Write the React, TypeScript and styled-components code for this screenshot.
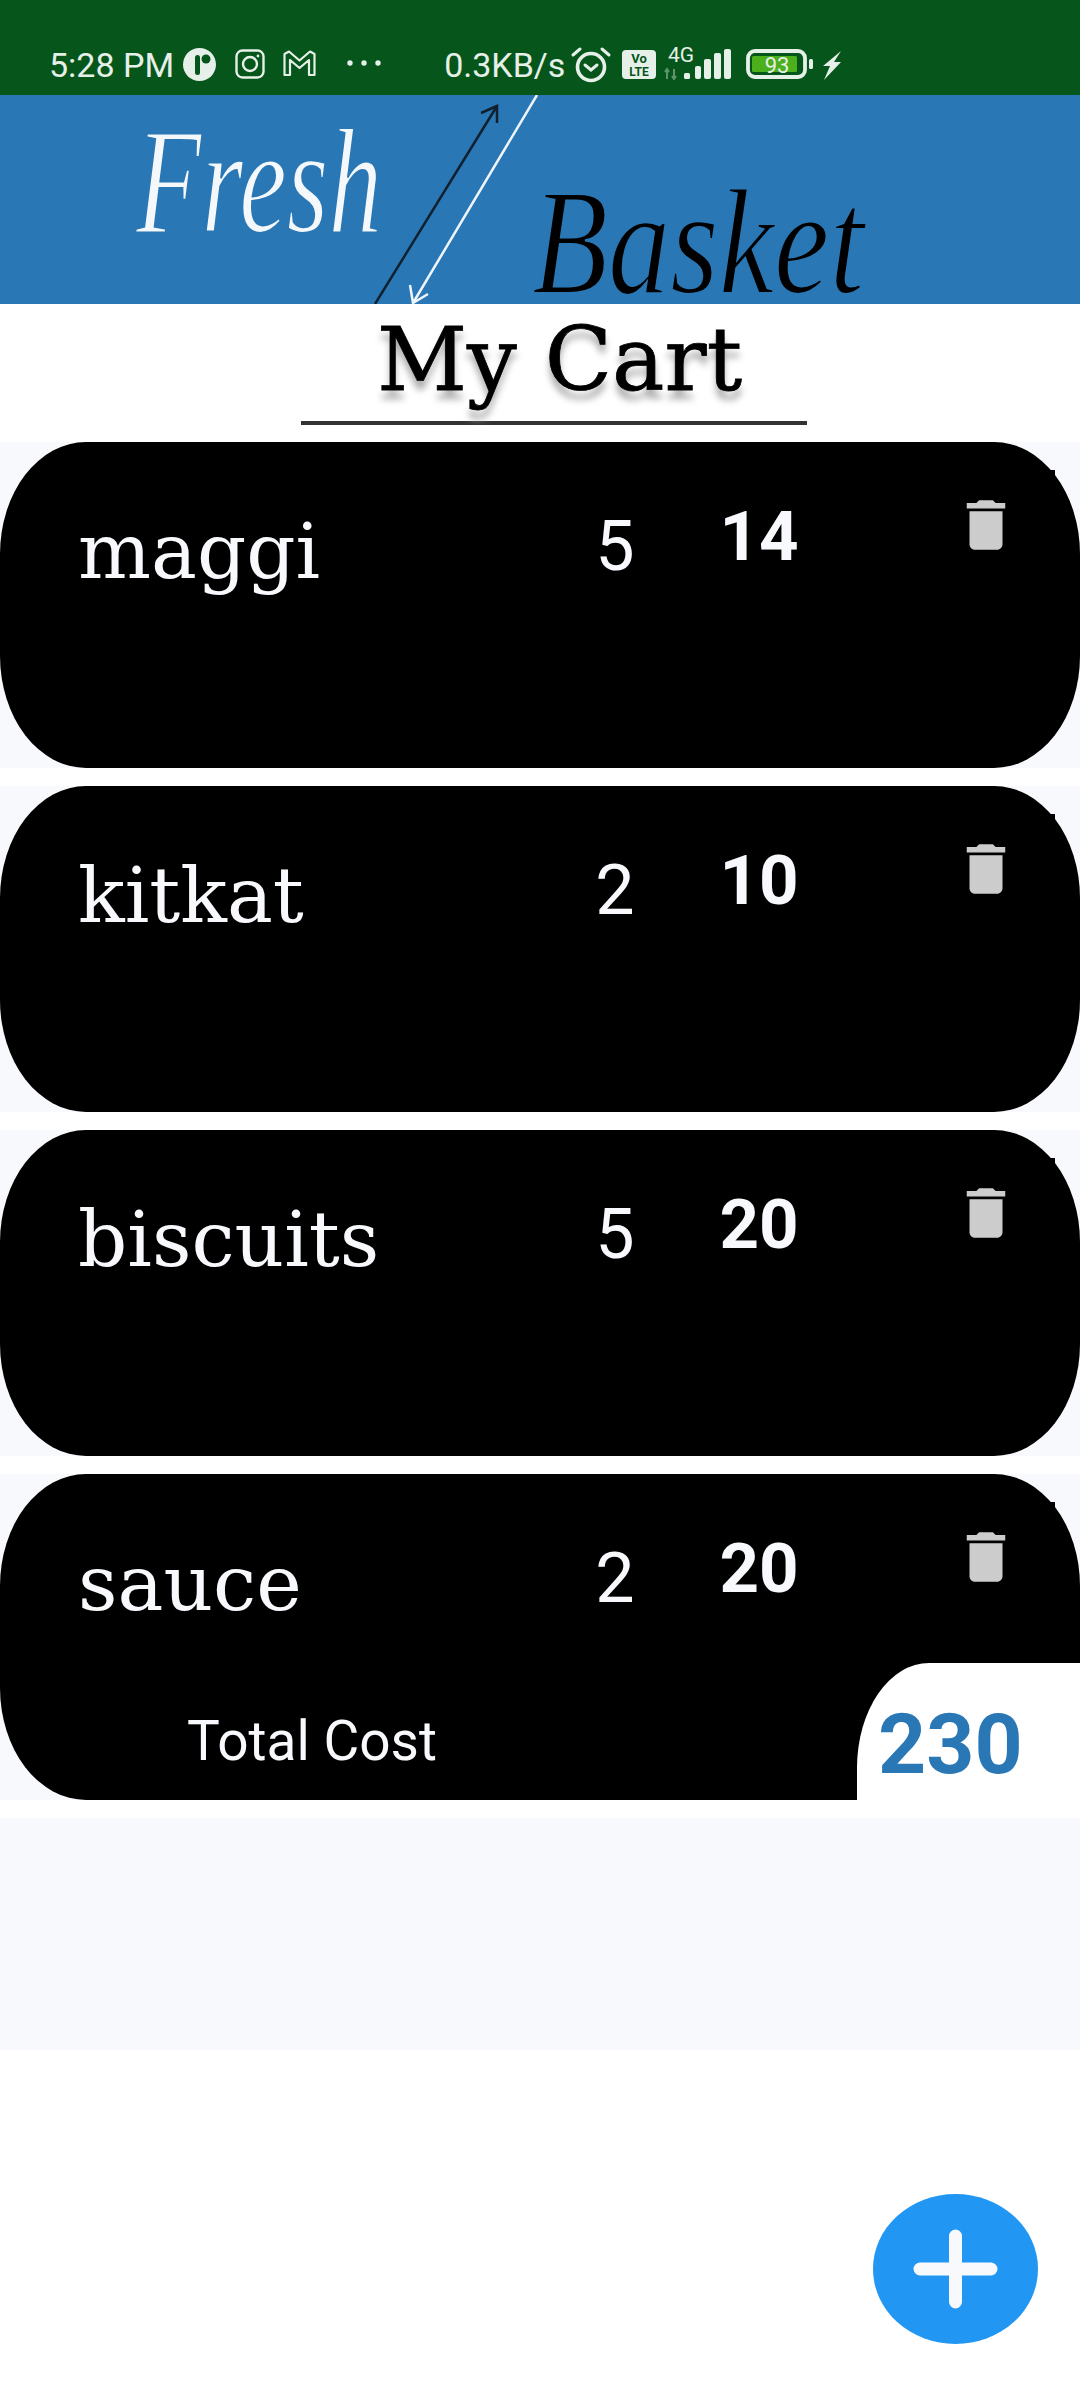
import React from "react";
import styled, { createGlobalStyle } from "styled-components";

const GlobalStyle = createGlobalStyle`
  html, body {
    margin: 0;
    padding: 0;
    background: #fff;
    font-family: Roboto, "Liberation Sans", sans-serif;
  }
`;

const Page = styled.div`
  width: 1080px;
  height: 2400px;
  background: #fff;
  overflow: hidden;
`;

const StatusBar = styled.div`
  height: 95px;
  box-sizing: border-box;
  padding: 47px 0 0 49px;
  display: flex;
  align-items: flex-start;
  background: #06561b;
  color: #e6f0e9;
`;

const StatusText = styled.span<{ $left?: number }>`
  margin-left: ${p => p.$left ?? 0}px;
  font-size: 34px;
  line-height: 36px;
  white-space: nowrap;
`;

const StatusIcon = styled.svg<{ $left: number; $top?: number }>`
  display: block;
  flex: none;
  margin-left: ${p => p.$left}px;
  margin-top: ${p => p.$top ?? 0}px;
`;

const Banner = styled.div`
  height: 209px;
  background: #2a77b5;
  overflow: hidden;
`;

const LogoArt = styled.svg`
  display: block;
`;

const TitleBar = styled.div`
  height: 138px;
  box-sizing: border-box;
  padding: 8px 0 0 301px;
`;

const Title = styled.h1`
  width: 506px;
  height: 113px;
  margin: 0;
  padding-left: 11px;
  box-sizing: border-box;
  border-bottom: 4px solid #333;
  text-align: center;
  font-family: "DejaVu Serif", serif;
  font-size: 88px;
  font-weight: 400;
  line-height: 96px;
  color: #000;
  -webkit-text-stroke: 0.8px #000;
  text-shadow: 0 9px 7px #aaa;
`;

const CartList = styled.div`
  display: flex;
  flex-direction: column;
  gap: 18px;
`;

const Slot = styled.div`
  position: relative;
  height: 326px;
  background: #f8f9fd;
`;

const Card = styled.div`
  height: 100%;
  background: #000;
  border-radius: 86px / 112px;
  display: grid;
  grid-template-columns: 568px 94px 194px 199px;
  align-items: start;
`;

const ItemName = styled.div`
  padding: 71px 0 0 78px;
  font-family: "DejaVu Serif", serif;
  font-size: 77px;
  line-height: 1;
  color: #f8f9fd;
`;

const Quantity = styled.div`
  padding-top: 69px;
  text-align: center;
  font-size: 70px;
  line-height: 1;
  color: #f8f9fd;
`;

const Price = styled.div`
  padding-top: 60px;
  text-align: center;
  font-size: 69px;
  font-weight: 700;
  line-height: 1;
  color: #f8f9fd;
`;

const ActionCell = styled.div`
  height: 100px;
  margin-top: 28px;
  padding: 22px 0 0 97px;
  box-sizing: border-box;
  background: #000;
`;

const TrashIcon = styled.svg`
  display: block;
  fill: #ccc;
`;

const TotalLabel = styled.div`
  position: absolute;
  left: 187px;
  top: 240px;
  font-size: 55px;
  line-height: 1;
  color: #f8f9fd;
`;

const TotalBox = styled.div`
  position: absolute;
  right: 0;
  bottom: 0;
  width: 223px;
  height: 137px;
  box-sizing: border-box;
  padding: 40px 0 0 21px;
  background: #fff;
  border-top-left-radius: 72px 105px;
  font-size: 84px;
  font-weight: 700;
  line-height: 1;
  color: #2a77b5;
`;

const EmptyArea = styled.div`
  height: 232px;
  margin-top: 18px;
  background: #f8f9fd;
`;

const FabRow = styled.div`
  display: flex;
  justify-content: flex-end;
  padding: 144px 42px 0 0;
`;

const Fab = styled.button`
  width: 165px;
  height: 150px;
  padding: 0;
  border: none;
  border-radius: 50%;
  background: #2196f3;
  display: flex;
  align-items: center;
  justify-content: center;
`;

const ITEMS = [
  { name: "maggi", qty: 5, price: 14 },
  { name: "kitkat", qty: 2, price: 10 },
  { name: "biscuits", qty: 5, price: 20 },
  { name: "sauce", qty: 2, price: 20 }
];

const Trash = () => (
  <TrashIcon width="66" height="66" viewBox="0 0 24 24">
    <path d="M6 19c0 1.1.9 2 2 2h8c1.1 0 2-.9 2-2V7H6v12zM19 4h-3.5l-1-1h-5l-1 1H5v2h14V4z" />
  </TrashIcon>
);

// the logo is a picture in the original, so it stays one drawing; the banner-blue
// stroke on the letters thins them towards the hairline script
const Logo = () => (
  <LogoArt width="1080" height="209" viewBox="0 0 1080 209">
    <g fontFamily="'Liberation Serif', serif" fontStyle="italic" stroke="#2a77b5" strokeWidth="2.2">
      <text x="136" y="137" fontSize="150" fill="#f4f8fb" textLength="246" lengthAdjust="spacingAndGlyphs">
        Fresh
      </text>
      <text x="532" y="198" fontSize="150" fill="#000" textLength="332" lengthAdjust="spacingAndGlyphs">
        Basket
      </text>
    </g>
    <g fill="none" strokeWidth="2.5">
      <path d="M375 209 L497 11 M481 18 L497 11 L497 28" stroke="#10202e" />
      <path d="M537 0 L413 208 M410 190 L413 208 L428 199" stroke="#eef4f9" />
    </g>
  </LogoArt>
);

const App: React.FC = () => (
  <Page>
    <GlobalStyle />
    <StatusBar>
      <StatusText>5:28 PM</StatusText>
      <StatusIcon $left={9} $top={1} width="33" height="33" viewBox="0 0 33 33">
        <circle cx="16.5" cy="16.5" r="16.5" fill="#e6f0e9" />
        <rect x="12" y="7" width="5" height="20" rx="2.5" fill="#06561b" />
        <circle cx="23" cy="11" r="4.5" fill="#06561b" />
      </StatusIcon>
      <StatusIcon $left={19} $top={2} width="30" height="30" viewBox="0 0 30 30" fill="none" stroke="#e6f0e9" strokeWidth="2.4">
        <rect x="1.5" y="1.5" width="27" height="27" rx="6" />
        <circle cx="15" cy="15" r="7" />
        <circle cx="23" cy="7" r="1.4" fill="#e6f0e9" stroke="none" />
      </StatusIcon>
      <StatusIcon $left={18} $top={3} width="33" height="27" viewBox="0 0 33 27" fill="none" stroke="#e6f0e9" strokeWidth="2.2" strokeLinejoin="round">
        <path d="M1.5 25V4L6 1.5L16.5 10.5L27 1.5L31.5 4V25H26V10L16.5 18L7 10V25Z" />
      </StatusIcon>
      <StatusIcon $left={31} width="34" height="32" viewBox="0 0 34 32" fill="#e6f0e9">
        <circle cx="3" cy="16" r="2.7" />
        <circle cx="17" cy="16" r="2.7" />
        <circle cx="31" cy="16" r="2.7" />
      </StatusIcon>
      <StatusText $left={63}>0.3KB/s</StatusText>
      <StatusIcon $left={5} $top={-1} width="42" height="38" viewBox="0 0 42 38" fill="none" stroke="#e6f0e9" strokeLinecap="round">
        <circle cx="21" cy="21" r="13.5" strokeWidth="3.6" />
        <path d="M15 19L21 24L27 19" strokeWidth="3" />
        <path d="M3 9L10 3M39 9L32 3" strokeWidth="3" />
      </StatusIcon>
      <StatusIcon $left={10} $top={3} width="34" height="29" viewBox="0 0 34 29">
        <rect width="34" height="29" rx="4" fill="#e6f0e9" />
        <text x="17" y="13" textAnchor="middle" fontSize="13" fontWeight="700" fontFamily="Roboto, sans-serif" fill="#06561b">Vo</text>
        <text x="17" y="26" textAnchor="middle" fontSize="12" fontWeight="700" fontFamily="Roboto, sans-serif" fill="#06561b">LTE</text>
      </StatusIcon>
      <StatusIcon $left={8} width="68" height="33" viewBox="0 0 68 33" fill="#e6f0e9">
        <text x="4" y="15" fontSize="21" fontFamily="Roboto, sans-serif">4G</text>
        <path d="M3 32V23M1 25L3 22L5 25M10 22V31M8 29L10 32L12 29" stroke="#e6f0e9" strokeOpacity=".4" strokeWidth="2" fill="none" />
        <rect x="20" y="26" width="6" height="6" rx="1.5" />
        <rect x="31" y="19" width="6" height="13" rx="2" />
        <rect x="40" y="12" width="7" height="20" rx="2" />
        <rect x="50" y="6" width="7" height="26" rx="2" />
        <rect x="60" y="2" width="7" height="30" rx="2" />
      </StatusIcon>
      <StatusIcon $left={14} $top={2} width="72" height="30" viewBox="0 0 72 30">
        <rect x="2" y="2" width="57" height="26" rx="7" fill="none" stroke="#e6f0e9" strokeWidth="3.8" />
        <rect x="6" y="7" width="45" height="16" rx="1.5" fill="#4caf1c" />
        <text x="31" y="24" textAnchor="middle" fontSize="22" fontFamily="Roboto, sans-serif" fill="#e6f0e9">93</text>
        <rect x="63" y="10" width="4" height="10" rx="1.5" fill="#e6f0e9" />
      </StatusIcon>
      <StatusIcon $left={4} $top={4} width="20" height="29" viewBox="0 0 20 29" fill="#e6f0e9">
        <path d="M19 0L1 15H8L2 29L19 11H12Z" />
      </StatusIcon>
    </StatusBar>

    <Banner>
      <Logo />
    </Banner>

    <TitleBar>
      <Title>My Cart</Title>
    </TitleBar>

    <CartList>
      {ITEMS.map((item, i) => (
        <Slot key={item.name}>
          <Card>
            <ItemName>{item.name}</ItemName>
            <Quantity>{item.qty}</Quantity>
            <Price>{item.price}</Price>
            <ActionCell>
              <Trash />
            </ActionCell>
          </Card>
          {i === ITEMS.length - 1 && (
            <>
              <TotalLabel>Total Cost</TotalLabel>
              <TotalBox>230</TotalBox>
            </>
          )}
        </Slot>
      ))}
    </CartList>
    <EmptyArea />

    <FabRow>
      <Fab aria-label="Add item">
        <svg width="85" height="80" viewBox="0 0 85 80" fill="none" stroke="#f8f9fd" strokeWidth="13" strokeLinecap="round">
          <path d="M7 40H78M42.5 7V73" />
        </svg>
      </Fab>
    </FabRow>
  </Page>
);

export default App;
